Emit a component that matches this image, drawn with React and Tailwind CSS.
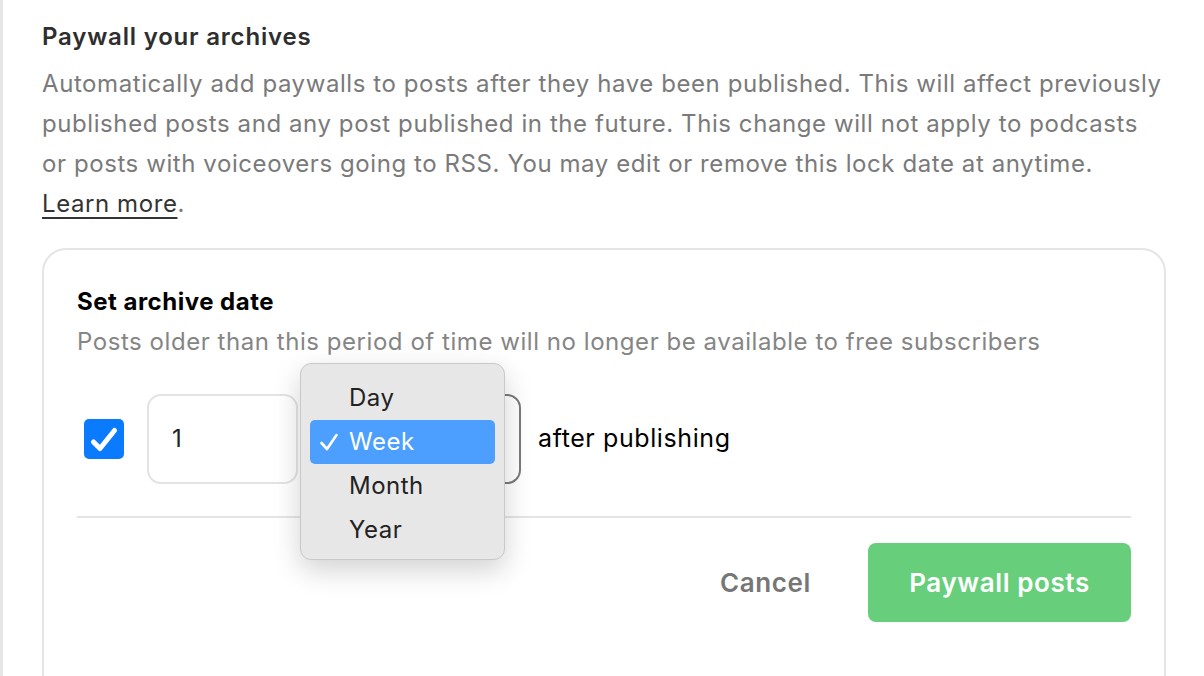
import React from "react";

const font = { fontFamily: "Inter, 'Liberation Sans', sans-serif" };

function CheckBox() {
  return (
    <div className="h-[40px] w-[40px] rounded-[5px] bg-[#0a7aff]">
      <svg width="40" height="40" viewBox="0 0 40 40" fill="none">
        <path d="M9.5 23 L16 29.5 L30.5 11.5" stroke="white" strokeWidth="5" strokeLinecap="round" strokeLinejoin="round" />
      </svg>
    </div>
  );
}

function PeriodMenu() {
  const items = ["Day", "Week", "Month", "Year"];
  return (
    <div className="absolute left-[-12px] top-[-31px] z-10 w-[205px] rounded-[11px] border border-[#c9c9c9] bg-[#e7e7e7] px-[9px] pt-[12px] pb-[7px] shadow-[0_10px_28px_rgba(0,0,0,0.18)]">
      {items.map((item) => {
        const active = item === "Week";
        return (
          <div
            key={item}
            className={`flex h-[44px] items-center rounded-[5px] text-[24px] tracking-[0.5px] ${active ? "bg-[#4c9ffe] text-white" : "text-[#222]"}`}
          >
            <span className="flex w-[39px] justify-center pr-[2px]">
              {active && (
                <svg width="20" height="20" viewBox="0 0 20 20" fill="none">
                  <path d="M2.5 11 L8 17 L17.5 3" stroke="white" strokeWidth="2.6" strokeLinecap="round" strokeLinejoin="round" />
                </svg>
              )}
            </span>
            {item}
          </div>
        );
      })}
    </div>
  );
}

export default function App() {
  return (
    <div className="h-[676px] w-[1204px] overflow-hidden bg-white" style={font}>
      <div className="h-full border-l-[3px] border-[#e6e6e6] pl-[39px] pr-[38px] pt-[20px]">
        <h2 className="text-[24px] font-semibold leading-[34px] tracking-[0.8px] text-[#2e2e2e]">Paywall your archives</h2>
        <p className="mt-[10px] whitespace-nowrap text-[24px] leading-[40px] tracking-[0.58px] text-[#7a7a7a]">
          Automatically add paywalls to posts after they have been published. This will affect previously
          <br />
          published posts and any post published in the future. This change will not apply to podcasts
          <br />
          or posts with voiceovers going to RSS. You may edit or remove this lock date at anytime.
          <br />
          <a className="text-[#333] underline decoration-[2px] underline-offset-[5px]">Learn more</a>.
        </p>

        <div className="mt-[24px] h-[460px] rounded-[24px] border-2 border-[#e5e5e5] px-[33px] pt-[37px]">
          <h3 className="text-[24px] font-bold leading-[30px] tracking-[0.5px] text-black">Set archive date</h3>
          <p className="mt-[9px] whitespace-nowrap text-[24px] leading-[32px] tracking-[0.55px] text-[#858585]">
            Posts older than this period of time will no longer be available to free subscribers
          </p>

          <div className="mt-[36px] flex items-center pl-[7px]">
            <CheckBox />
            <div className="ml-[23px] flex h-[90px] w-[151px] items-center rounded-[14px] border-2 border-[#e3e3e3] pl-[23px] text-[24px] text-[#222]">
              1
            </div>
            <div className="relative ml-[14px] h-[90px] w-[209px]">
              <div className="h-full w-full rounded-[14px] border-2 border-[#7a7a7a]" />
              <PeriodMenu />
            </div>
            <span className="ml-[17px] text-[25px] tracking-[0.6px] text-black">after publishing</span>
          </div>

          <div className="mt-[32px] h-[2px] bg-[#e5e5e5]" />

          <div className="mt-[25px] flex items-center justify-end gap-[57px]">
            <button className="text-[26px] font-semibold tracking-[0.6px] text-[#767676]">Cancel</button>
            <button className="h-[79px] w-[263px] rounded-[8px] bg-[#67cf7b] text-[26px] font-semibold tracking-[0.6px] text-white">
              Paywall posts
            </button>
          </div>
        </div>
      </div>
    </div>
  );
}
